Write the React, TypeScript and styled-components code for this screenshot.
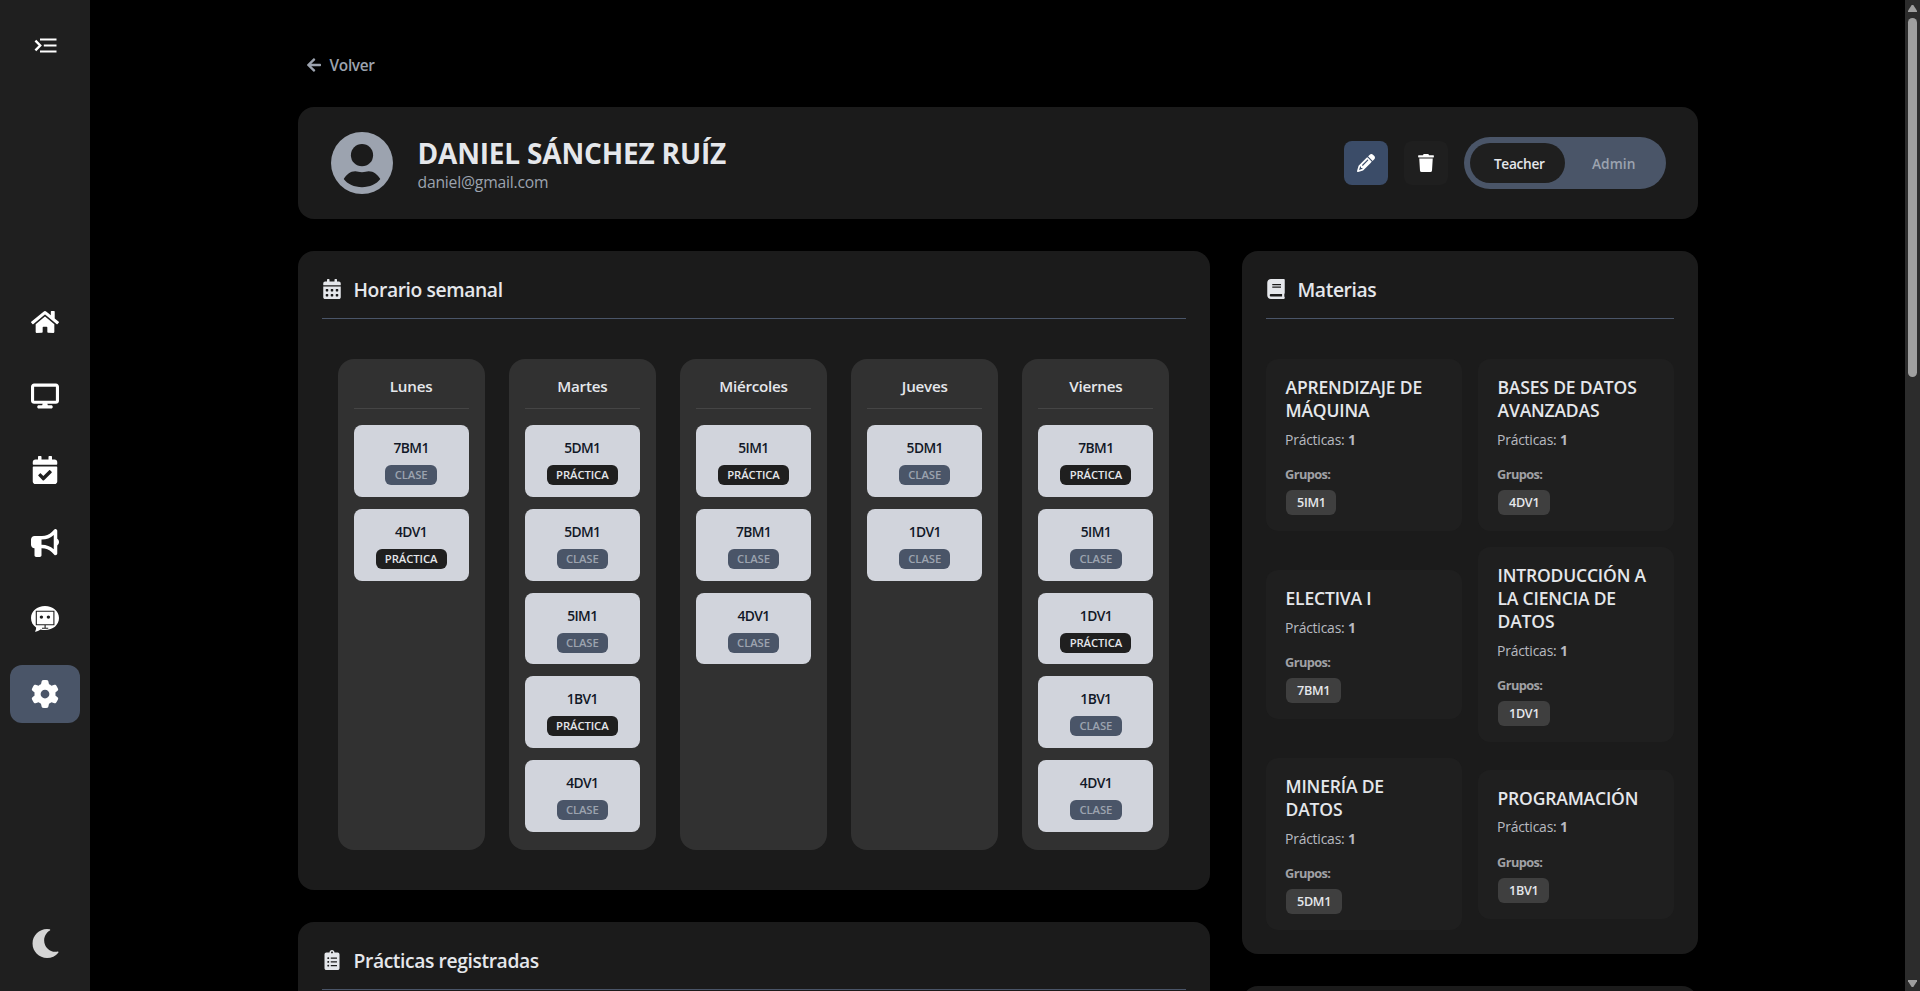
import React from 'react';
import styled, { createGlobalStyle } from 'styled-components';
import {
  FaArrowLeft,
  FaBook,
  FaCalendarAlt,
  FaCalendarCheck,
  FaClipboardList,
  FaHome,
  FaMoon,
  FaTrash,
} from 'react-icons/fa';
import { FaBullhorn, FaDisplay, FaGear, FaPencil } from 'react-icons/fa6';

const GlobalStyle = createGlobalStyle`
  *, *::before, *::after { box-sizing: border-box; }
  html, body { margin: 0; background: #000; overflow: hidden; }
  body { font-family: 'Open Sans', 'Noto Sans', sans-serif; color: #e5e7eb; }
  svg { display: block; flex-shrink: 0; }
  h1, h2, h3, h4, p { margin: 0; font-weight: 600; }
  button { border: 0; padding: 0; font: inherit; color: inherit; background: none; }
`;

const Shell = styled.div`
  display: flex;
  height: 991px;
  overflow: hidden;
  background: #000;
`;

const Sidebar = styled.aside`
  width: 90px;
  flex-shrink: 0;
  display: flex;
  flex-direction: column;
  align-items: center;
  padding-top: 34px;
  background: #1f1f1f;
  color: #fff;
`;

const Nav = styled.nav`
  display: flex;
  flex-direction: column;
  gap: 15.7px;
  margin: 235.3px 0 206px;
`;

const NavItem = styled.button<{ $active?: boolean; $tall?: boolean }>`
  width: 70px;
  height: ${(p) => (p.$tall ? '61px' : '58px')};
  display: flex;
  align-items: center;
  justify-content: center;
  border-radius: 12px;
  font-size: 28px;
  background: ${(p) => (p.$active ? '#4a5568' : 'transparent')};
`;

const ThemeButton = styled.button`
  font-size: 29px;
  color: #d4d4d4;
`;

const Main = styled.main`
  flex: 1;
  min-width: 0;
  overflow: hidden;
  padding-top: 53px;
`;

const Content = styled.div`
  width: 1400px;
  margin: 0 auto;
`;

const Back = styled.a`
  display: flex;
  align-items: center;
  gap: 8px;
  height: 24px;
  margin: 0 0 30px 8px;
  color: #9ca3af;
  font-size: 15.4px;
  font-weight: 600;
  letter-spacing: -0.3px;
  svg { font-size: 16px; }
`;

const Card = styled.section`
  background: #1b1b1b;
  border-radius: 16px;
`;

const Profile = styled(Card)`
  display: flex;
  align-items: center;
  height: 112px;
  padding: 0 32px 0 33px;
  margin-bottom: 32px;
`;

const Identity = styled.div`
  flex: 1;
  padding: 1px 0 0 25px;
`;

const Name = styled.h1`
  font-size: 28px;
  font-weight: 700;
  line-height: 36px;
  letter-spacing: -0.18px;
`;

const Email = styled.p`
  margin-top: 1px;
  font-size: 15.7px;
  font-weight: 400;
  line-height: 20px;
  letter-spacing: -0.2px;
  color: #9ca3af;
`;

const Actions = styled.div`
  display: flex;
  align-items: center;
  gap: 16px;
`;

const IconButton = styled.button<{ $tone: string }>`
  width: 44px;
  height: 44px;
  display: flex;
  align-items: center;
  justify-content: center;
  padding-left: 1px;
  border-radius: 8px;
  background: ${(p) => p.$tone};
  color: #fff;
  font-size: 18px;
`;

const RoleToggle = styled.div`
  display: flex;
  width: 202px;
  height: 52px;
  padding: 6px;
  border-radius: 26px;
  background: #4a5568;
`;

const Role = styled.button<{ $active?: boolean }>`
  flex: 1;
  height: 40px;
  padding: ${(p) => (p.$active ? '1px 0 0 4px' : '1px 0 0 3px')};
  border-radius: 20px;
  font-size: 13.7px;
  font-weight: 600;
  letter-spacing: ${(p) => (p.$active ? '-0.3px' : '0.1px')};
  background: ${(p) => (p.$active ? '#1f1f1f' : 'transparent')};
  color: ${(p) => (p.$active ? '#e5e7eb' : '#9ca3af')};
`;

const Columns = styled.div`
  display: grid;
  grid-template-columns: 912px 456px;
  gap: 32px;
  align-items: start;
`;

const Stack = styled.div`
  display: flex;
  flex-direction: column;
  gap: 32px;
`;

const Panel = styled(Card)`
  padding: 24px;
`;

const PanelTitle = styled.h2`
  display: flex;
  align-items: center;
  gap: 12px;
  height: 44px;
  padding-bottom: 14px;
  border-bottom: 1px solid #4a5568;
  font-size: 19.3px;
  letter-spacing: -0.4px;
  svg { font-size: 20px; margin-bottom: 1px; }
`;

const Week = styled.div`
  display: grid;
  grid-template-columns: repeat(5, 1fr);
  gap: 24px;
  padding: 40px 16px 16px;
`;

const Day = styled.div`
  display: flex;
  flex-direction: column;
  gap: 12px;
  padding: 16px 16px 18px;
  border-radius: 16px;
  background: #313131;
`;

const DayName = styled.h3`
  height: 34px;
  margin-bottom: 4px;
  border-bottom: 1px solid #454545;
  font-size: 15.2px;
  line-height: 22px;
  letter-spacing: -0.25px;
  text-align: center;
`;

const Slot = styled.div`
  display: flex;
  flex-direction: column;
  align-items: center;
  height: 71.8px;
  padding-top: 13px;
  border-radius: 8px;
  background: #d1d4dc;
`;

const SlotGroup = styled.span`
  font-size: 13.8px;
  font-weight: 600;
  line-height: 20px;
  letter-spacing: -0.6px;
  color: #111827;
`;

const Badge = styled.span<{ $practice: boolean }>`
  height: 20px;
  margin-top: 7px;
  padding: 0 9.3px;
  border-radius: 6px;
  font-size: 11.3px;
  font-weight: 600;
  line-height: 20px;
  letter-spacing: -0.1px;
  background: ${(p) => (p.$practice ? '#1f1f1f' : '#4a5568')};
  color: ${(p) => (p.$practice ? '#e5e7eb' : '#9ca3af')};
`;

const Subjects = styled.div`
  display: grid;
  grid-template-columns: 1fr 1fr;
  gap: 16px;
  align-items: center;
  padding-top: 40px;
`;

const Subject = styled.article`
  padding: 17px 16px 16px 20px;
  border-radius: 12px;
  background: #1f1f1f;
`;

const SubjectName = styled.h3`
  font-size: 17.5px;
  line-height: 23px;
  letter-spacing: -0.17px;
  white-space: pre;
`;

const Practices = styled.p`
  margin: 7.5px 0 0 -0.5px;
  font-size: 13.9px;
  font-weight: 400;
  line-height: 20px;
  letter-spacing: -0.2px;
  color: #b8bac0;
`;

const GroupsLabel = styled.p`
  margin: 14.5px 0 0 -0.5px;
  font-size: 12.8px;
  font-weight: 700;
  line-height: 20px;
  letter-spacing: -0.6px;
  color: #a0a1a5;
`;

const Chip = styled.span`
  display: block;
  width: fit-content;
  height: 25px;
  margin-top: 6px;
  padding: 0 10.6px 0 11.5px;
  border-radius: 6px;
  background: #3f3f3f;
  font-size: 12.6px;
  font-weight: 600;
  line-height: 26px;
  letter-spacing: -0.3px;
`;

const Scrollbar = styled.div`
  width: 15px;
  flex-shrink: 0;
  display: flex;
  flex-direction: column;
  align-items: center;
  padding: 5px 0 4px;
  background: #2c2c2c;
`;

const Thumb = styled.div`
  width: 9px;
  height: 359px;
  margin: 6px 0 auto;
  border-radius: 5px;
  background: #9f9f9f;
`;

const MenuIcon = () => (
  <svg width="24" height="24" viewBox="0 0 24 24" fill="none" stroke="#fff">
    <path d="M2.4 6.6 7.2 11.5 2.4 16.4" strokeWidth="2.4" />
    <path d="M7 5.500H23.500M10.800 11.500H23.500M7 17.500H23.500" strokeWidth="2.200" />
  </svg>
);

const BotIcon = () => (
  <svg width="28" height="26" viewBox="0 0 28 26">
    <path fill="#fff" d="M14 0C21.9 0 28 5 28 12s-6.100 12-14 12c-1.600 0-3-.2-4.400-.6C8 24.600 6 25.400 3.900 25.700c.8-1.300 1.300-2.600 1.200-4.200C1.800 19.200 0 16 0 12 0 5 6.100 0 14 0Z" />
    <path fill="none" stroke="#1f1f1f" strokeWidth="1.100" d="M5.300 5.200h17.600v13.600H5.300ZM14.100 18.800v3M11 22.200h6.200" />
    <circle cx="10.400" cy="11.100" r="1.700" fill="#1f1f1f" />
    <circle cx="17.400" cy="11.100" r="1.700" fill="#1f1f1f" />
  </svg>
);

const Avatar = () => (
  <svg width="62" height="62" viewBox="0 0 62 62">
    <circle cx="31" cy="31" r="31" fill="#9ca3af" />
    <circle cx="31" cy="23.200" r="11.100" fill="#1b1b1b" />
    <path
      fill="#1b1b1b"
      d="M12.700 47c2.600-4.300 6.600-7.700 11.600-7.700 2.400 0 3.600.9 6.700.9s4.300-.9 6.700-.9c5 0 9 3.400 11.600 7.700C45.600 52 38.700 55.200 31 55.200S16.400 52 12.700 47Z"
    />
  </svg>
);

const ScrollArrow = ({ down = false }: { down?: boolean }) => (
  <svg width="9" height="7" viewBox="0 0 9 7" fill="#9f9f9f">
    <path d={down ? 'M0 0H9V1.300L5.300 7H3.700L0 1.300Z' : 'M0 7H9V5.700L5.300 0H3.700L0 5.700Z'} />
  </svg>
);

type SlotData = [group: string, practice: boolean];

const week: { day: string; slots: SlotData[] }[] = [
  { day: 'Lunes', slots: [['7BM1', false], ['4DV1', true]] },
  { day: 'Martes', slots: [['5DM1', true], ['5DM1', false], ['5IM1', false], ['1BV1', true], ['4DV1', false]] },
  { day: 'Miércoles', slots: [['5IM1', true], ['7BM1', false], ['4DV1', false]] },
  { day: 'Jueves', slots: [['5DM1', false], ['1DV1', false]] },
  { day: 'Viernes', slots: [['7BM1', true], ['5IM1', false], ['1DV1', true], ['1BV1', false], ['4DV1', false]] },
];

const subjects = [
  { name: 'APRENDIZAJE DE\nMÁQUINA', group: '5IM1' },
  { name: 'BASES DE DATOS\nAVANZADAS', group: '4DV1' },
  { name: 'ELECTIVA I', group: '7BM1' },
  { name: 'INTRODUCCIÓN A\nLA CIENCIA DE\nDATOS', group: '1DV1' },
  { name: 'MINERÍA DE\nDATOS', group: '5DM1' },
  { name: 'PROGRAMACIÓN', group: '1BV1' },
];

export default function App() {
  return (
    <Shell>
      <GlobalStyle />
      <Sidebar>
        <button aria-label="Menú"><MenuIcon /></button>
        <Nav>
          <NavItem><FaHome /></NavItem>
          <NavItem><FaDisplay /></NavItem>
          <NavItem><FaCalendarCheck /></NavItem>
          <NavItem><FaBullhorn /></NavItem>
          <NavItem $tall><BotIcon /></NavItem>
          <NavItem $active><FaGear /></NavItem>
        </Nav>
        <ThemeButton aria-label="Tema"><FaMoon /></ThemeButton>
      </Sidebar>
      <Main>
        <Content>
          <Back><FaArrowLeft />Volver</Back>
          <Profile>
            <Avatar />
            <Identity>
              <Name>DANIEL SÁNCHEZ RUÍZ</Name>
              <Email>daniel@gmail.com</Email>
            </Identity>
            <Actions>
              <IconButton $tone="#3b4c68" aria-label="Editar"><FaPencil /></IconButton>
              <IconButton $tone="#1f1f1f" aria-label="Eliminar"><FaTrash /></IconButton>
              <RoleToggle>
                <Role $active>Teacher</Role>
                <Role>Admin</Role>
              </RoleToggle>
            </Actions>
          </Profile>
          <Columns>
            <Stack>
              <Panel>
                <PanelTitle><FaCalendarAlt />Horario semanal</PanelTitle>
                <Week>
                  {week.map(({ day, slots }) => (
                    <Day key={day}>
                      <DayName>{day}</DayName>
                      {slots.map(([group, practice], i) => (
                        <Slot key={i}>
                          <SlotGroup>{group}</SlotGroup>
                          <Badge $practice={practice}>{practice ? 'PRÁCTICA' : 'CLASE'}</Badge>
                        </Slot>
                      ))}
                    </Day>
                  ))}
                </Week>
              </Panel>
              <Panel>
                <PanelTitle><FaClipboardList />Prácticas registradas</PanelTitle>
              </Panel>
            </Stack>
            <Stack>
              <Panel>
                <PanelTitle><FaBook />Materias</PanelTitle>
                <Subjects>
                  {subjects.map(({ name, group }) => (
                    <Subject key={name}>
                      <SubjectName>{name}</SubjectName>
                      <Practices>Prácticas: <b>1</b></Practices>
                      <GroupsLabel>Grupos:</GroupsLabel>
                      <Chip>{group}</Chip>
                    </Subject>
                  ))}
                </Subjects>
              </Panel>
              <Panel />
            </Stack>
          </Columns>
        </Content>
      </Main>
      <Scrollbar>
        <ScrollArrow />
        <Thumb />
        <ScrollArrow down />
      </Scrollbar>
    </Shell>
  );
}
